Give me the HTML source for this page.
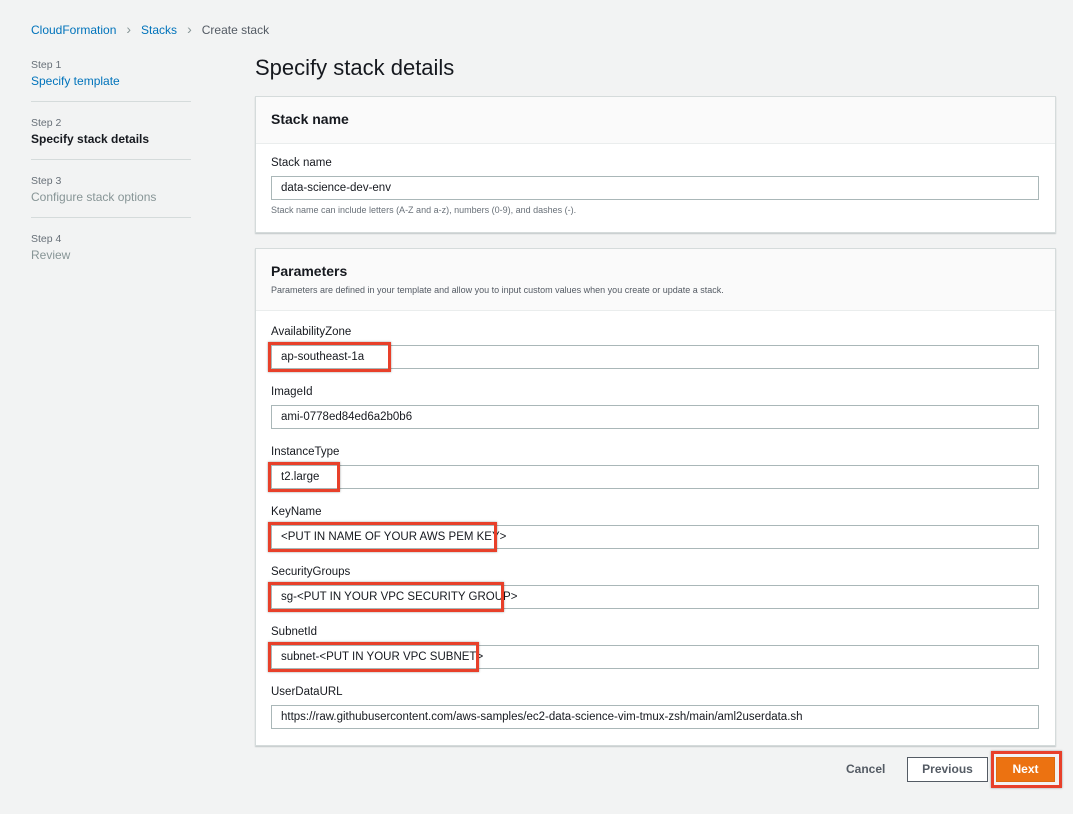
<!DOCTYPE html>
<html><head><meta charset="utf-8"><style>
*{box-sizing:border-box;margin:0;padding:0}
body{width:1073px;height:814px;background:#f2f3f3;font-family:"Liberation Sans",sans-serif;color:#16191f;position:relative;overflow:hidden;font-size:12px}
.a{position:absolute;white-space:nowrap}
.blue{color:#0073bb}
.grey{color:#687078}
.hr{position:absolute;left:31px;width:160px;height:1px;background:#d5dbdb}
.panel{position:absolute;left:255px;width:801px;background:#fff;border:1px solid #d5dbdb;box-shadow:0 1px 1px rgba(0,28,36,.2)}
.ph{background:#fafafa;border-bottom:1px solid #eaeded}
.inp{position:absolute;left:271px;width:768px;height:24px;border:1px solid #aab7b8;background:#fff;padding-left:9px;line-height:22px;font-size:11.5px}
.lbl{position:absolute;left:271px;font-size:11.5px}
.red{position:absolute;border:3px solid #e8402a;box-shadow:0 0 2px rgba(0,0,0,.4)}
</style></head><body>
<div class="a" style="left:31px;top:21px;font-size:12px"><span class="blue">CloudFormation</span><span style="color:#879596;margin:0 10px;font-size:14px">&#x203A;</span><span class="blue">Stacks</span><span style="color:#879596;margin:0 10px;font-size:14px">&#x203A;</span><span style="color:#545b64">Create stack</span></div>

<div class="a grey" style="left:31px;top:59px;font-size:10.5px">Step 1</div>
<div class="a blue" style="left:31px;top:74px;font-size:12px">Specify template</div>
<div class="hr" style="top:101px"></div>
<div class="a grey" style="left:31px;top:117px;font-size:10.5px">Step 2</div>
<div class="a" style="left:31px;top:132px;font-size:12px;font-weight:bold">Specify stack details</div>
<div class="hr" style="top:159px"></div>
<div class="a grey" style="left:31px;top:175px;font-size:10.5px">Step 3</div>
<div class="a" style="left:31px;top:190px;font-size:12px;color:#879596">Configure stack options</div>
<div class="hr" style="top:217px"></div>
<div class="a grey" style="left:31px;top:233px;font-size:10.5px">Step 4</div>
<div class="a" style="left:31px;top:248px;font-size:12px;color:#879596">Review</div>

<div class="a" style="left:255px;top:55px;font-size:22px">Specify stack details</div>

<div class="panel" style="top:96px;height:137px"><div class="ph" style="height:47px"></div></div>
<div class="a" style="left:271px;top:111px;font-size:14px;font-weight:bold">Stack name</div>
<div class="lbl" style="top:157px">Stack name</div>
<div class="inp" style="top:176px">data-science-dev-env</div>
<div class="a grey" style="left:271px;top:205px;font-size:9px">Stack name can include letters (A-Z and a-z), numbers (0-9), and dashes (-).</div>

<div class="panel" style="top:248px;height:498px"><div class="ph" style="height:62px"></div></div>
<div class="a" style="left:271px;top:263px;font-size:14px;font-weight:bold">Parameters</div>
<div class="a" style="left:271px;top:285px;font-size:9px;color:#545b64">Parameters are defined in your template and allow you to input custom values when you create or update a stack.</div>

<div class="lbl" style="top:326px">AvailabilityZone</div>
<div class="inp" style="top:345px">ap-southeast-1a</div>
<div class="lbl" style="top:386px">ImageId</div>
<div class="inp" style="top:405px">ami-0778ed84ed6a2b0b6</div>
<div class="lbl" style="top:446px">InstanceType</div>
<div class="inp" style="top:465px">t2.large</div>
<div class="lbl" style="top:506px">KeyName</div>
<div class="inp" style="top:525px">&lt;PUT IN NAME OF YOUR AWS PEM KEY&gt;</div>
<div class="lbl" style="top:566px">SecurityGroups</div>
<div class="inp" style="top:585px">sg-&lt;PUT IN YOUR VPC SECURITY GROUP&gt;</div>
<div class="lbl" style="top:626px">SubnetId</div>
<div class="inp" style="top:645px">subnet-&lt;PUT IN YOUR VPC SUBNET&gt;</div>
<div class="lbl" style="top:686px">UserDataURL</div>
<div class="inp" style="top:705px">https://raw.githubusercontent.com/aws-samples/ec2-data-science-vim-tmux-zsh/main/aml2userdata.sh</div>

<div class="red" style="left:268px;top:342px;width:123px;height:30px"></div>
<div class="red" style="left:268px;top:462px;width:72px;height:30px"></div>
<div class="red" style="left:268px;top:522px;width:229px;height:30px"></div>
<div class="red" style="left:268px;top:582px;width:236px;height:30px"></div>
<div class="red" style="left:268px;top:642px;width:211px;height:30px"></div>

<div class="a" style="left:846px;top:762px;font-size:12px;font-weight:bold;color:#545b64">Cancel</div>
<div class="a" style="left:907px;top:757px;width:81px;height:25px;border:1px solid #545b64;background:#fff;text-align:center;line-height:23px;font-weight:bold;color:#545b64">Previous</div>
<div class="a" style="left:991px;top:751px;width:71px;height:37px;border:3px solid #e8402a;box-shadow:0 0 2px rgba(0,0,0,.4)"></div>
<div class="a" style="left:996px;top:757px;width:59px;height:25px;background:#ec7211;border:1px solid #dd6b10;text-align:center;line-height:23px;font-weight:bold;color:#fff">Next</div>
</body></html>
